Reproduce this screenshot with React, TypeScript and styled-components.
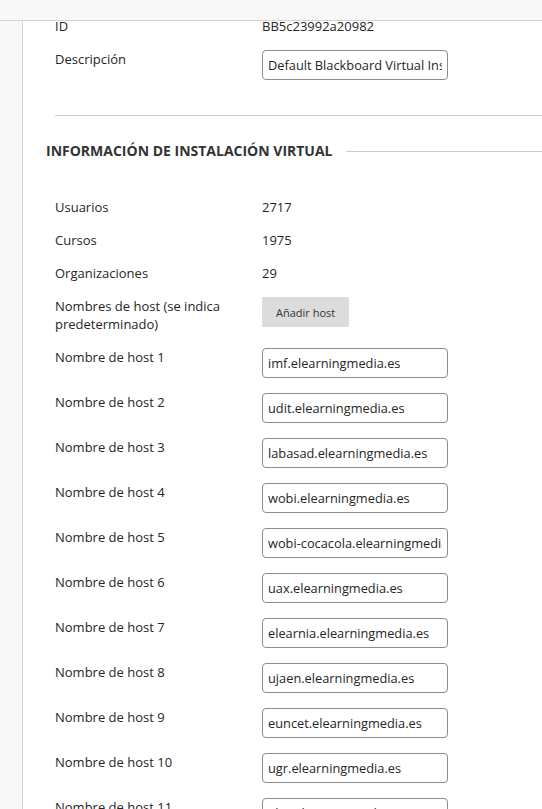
import React from "react";
import styled, { createGlobalStyle } from "styled-components";

const GlobalStyle = createGlobalStyle`
  html, body {
    margin: 0;
    padding: 0;
    background: #ffffff;
    font-family: "Open Sans", "Liberation Sans", sans-serif;
    color: #262626;
    overflow: hidden;
  }
`;

const hosts = [
    "imf.elearningmedia.es",
    "udit.elearningmedia.es",
    "labasad.elearningmedia.es",
    "wobi.elearningmedia.es",
    "wobi-cocacola.elearningmedia.es",
    "uax.elearningmedia.es",
    "elearnia.elearningmedia.es",
    "ujaen.elearningmedia.es",
    "euncet.elearningmedia.es",
    "ugr.elearningmedia.es",
    "ehu.elearningmedia.es",
];

const stats = [
    { label: "Usuarios", value: "2717" },
    { label: "Cursos", value: "1975" },
    { label: "Organizaciones", value: "29" },
];

const App: React.FC = () => {
    return (
        <>
            <GlobalStyle />
            <TopBar />
            <Page>
                <SideStrip />
                <Content>
                    <FieldRow>
                        <Label>ID</Label>
                        <Value>BB5c23992a20982</Value>
                    </FieldRow>
                    <FieldRow>
                        <Label>Descripción</Label>
                        <TextInput readOnly value="Default Blackboard Virtual Installation" />
                    </FieldRow>

                    <Divider />

                    <SectionHeading>
                        <HeadingText>Información de instalación virtual</HeadingText>
                        <HeadingLine />
                    </SectionHeading>

                    <Fields>
                        {stats.map((s) => (
                            <FieldRow key={s.label}>
                                <Label>{s.label}</Label>
                                <Value>{s.value}</Value>
                            </FieldRow>
                        ))}
                        <FieldRow>
                            <Label>Nombres de host (se indica predeterminado)</Label>
                            <div>
                                <AddButton type="button">Añadir host</AddButton>
                            </div>
                        </FieldRow>
                        {hosts.map((h, i) => (
                            <FieldRow key={h}>
                                <Label>Nombre de host {i + 1}</Label>
                                <TextInput readOnly value={h} />
                            </FieldRow>
                        ))}
                    </Fields>
                </Content>
            </Page>
        </>
    );
};

export default App;

const TopBar = styled.div`
  position: fixed;
  top: 0;
  left: 0;
  right: 0;
  height: 20px;
  background: #f8f8f8;
  border-bottom: 1px solid #d4d4d4;
  z-index: 10;
`;

const Page = styled.div`
  display: flex;
  min-height: 809px;
`;

const SideStrip = styled.div`
  width: 22px;
  flex-shrink: 0;
  background: #f8f8f8;
  border-right: 1px solid #d4d4d4;
`;

const Content = styled.div`
  flex: 1;
  padding-top: 17px;
  display: flex;
  flex-direction: column;
  gap: 15px;
`;

const Fields = styled.div`
  display: flex;
  flex-direction: column;
  gap: 15px;
  margin-top: 22px;
`;

const FieldRow = styled.div`
  display: grid;
  grid-template-columns: 207px 1fr;
  align-items: start;
  padding-left: 32px;
`;

const Label = styled.div`
  font-size: 13px;
  line-height: 18px;
  color: #262626;
  padding-right: 30px;
`;

const Value = styled.div`
  font-size: 13px;
  line-height: 18px;
  color: #262626;
`;

const TextInput = styled.input`
  box-sizing: border-box;
  width: 186px;
  height: 30px;
  padding: 0 5px;
  border: 1px solid #8c8c8c;
  border-radius: 4px;
  font-family: "Open Sans", "Liberation Sans", sans-serif;
  font-size: 12.8px;
  color: #262626;
  background: #fff;
  outline: none;
`;

const AddButton = styled.button`
  height: 30px;
  padding: 0 14px;
  border: none;
  border-radius: 0;
  background: #dcdcdc;
  font-family: "Open Sans", "Liberation Sans", sans-serif;
  font-size: 11px;
  color: #333;
  cursor: pointer;
`;

const Divider = styled.div`
  margin-top: 20px;
  margin-left: 32px;
  height: 1px;
  background: #cdcdcd;
`;

const SectionHeading = styled.div`
  display: flex;
  align-items: center;
  gap: 13px;
  padding-left: 23px;
  margin-top: 10px;
`;

const HeadingText = styled.h2`
  margin: 0;
  font-size: 14px;
  line-height: 20px;
  font-weight: 700;
  text-transform: uppercase;
  color: #333;
  white-space: nowrap;
`;

const HeadingLine = styled.div`
  flex: 1;
  height: 1px;
  background: #cdcdcd;
`;
